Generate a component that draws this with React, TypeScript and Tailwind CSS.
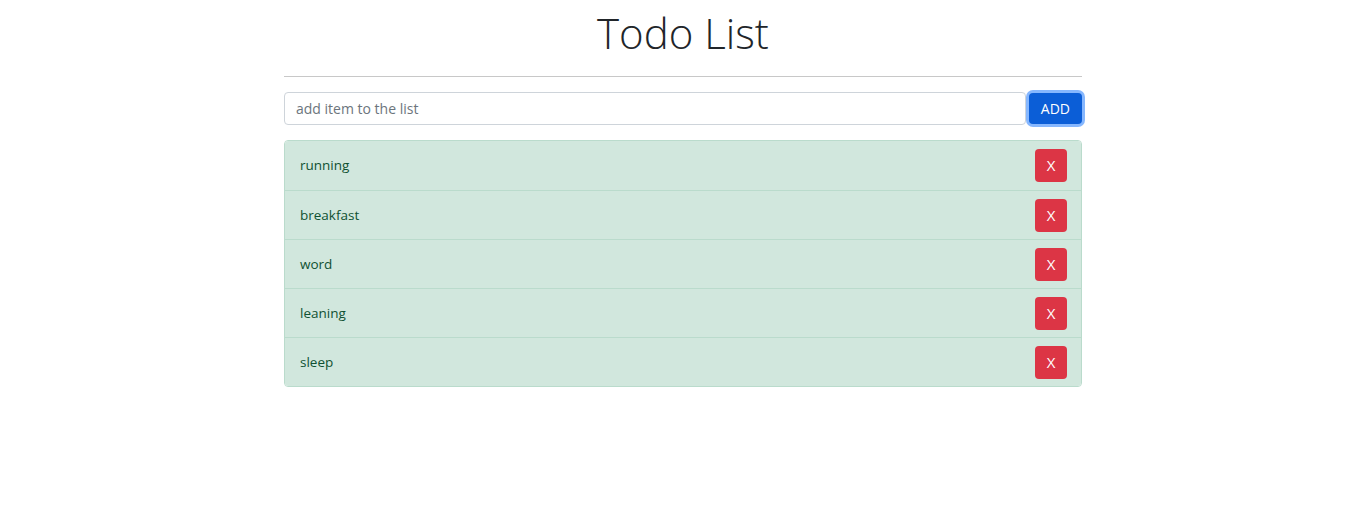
const items = ["running", "breakfast", "word", "leaning", "sleep"];

export default function App() {
  return (
    <div className="min-h-screen bg-white font-['Open_Sans',sans-serif] text-[#212529]">
      <div className="mx-auto w-[798px]">
        <h1 className="pt-[7px] pb-[17px] text-center text-[42px] font-light leading-[52px] text-[#212529]">
          Todo List
        </h1>
        <hr className="border-t border-[#c8c8c8]" />

        <div className="mt-[15px] flex items-center gap-[3px]">
          <input
            type="text"
            placeholder="add item to the list"
            className="h-[33px] flex-1 rounded-[4px] border border-[#ced4da] px-[11px] text-[14px] text-[#212529] placeholder:text-[#6c757d] outline-none"
          />
          <button className="h-[31px] rounded-[4px] bg-[#0b5ed7] px-[12px] text-[14px] text-white ring-[3px] ring-[#86b7fe]">
            ADD
          </button>
        </div>

        <ul className="mt-[15px] overflow-hidden rounded-[4px] border border-[#badbcc]">
          {items.map((item, i) => (
            <li
              key={item}
              className={`flex h-[49px] items-center justify-between bg-[#d1e7dd] pl-[15px] pr-[14px] text-[13.5px] text-[#0f5132] ${
                i > 0 ? "border-t border-[#badbcc]" : ""
              }`}
            >
              <span>{item}</span>
              <button className="h-[33px] w-[32px] rounded-[4px] bg-[#dc3545] text-[15px] text-white">
                X
              </button>
            </li>
          ))}
        </ul>
      </div>
    </div>
  );
}
